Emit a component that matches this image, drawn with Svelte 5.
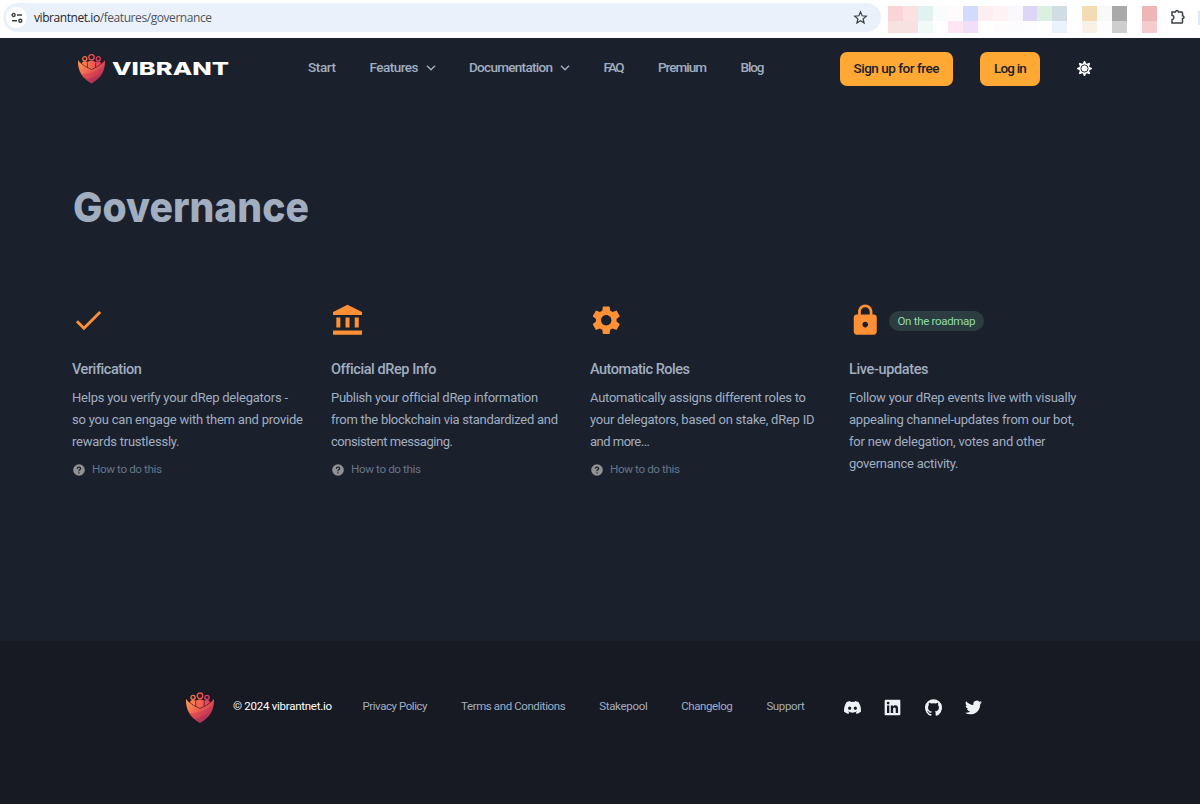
<script>
    const navItems = [
        { label: 'Start', width: 28 },
        { label: 'Features', width: 49, menu: true },
        { label: 'Documentation', width: 84, menu: true },
        { label: 'FAQ', width: 21 },
        { label: 'Premium', width: 49 },
        { label: 'Blog', width: 24 }
    ];

    const features = [
        {
            icon: 'check',
            title: 'Verification',
            width: 69.5,
            lines: [
                ['Helps you verify your dRep delegators -', 216],
                ['so you can engage with them and provide', 231],
                ['rewards trustlessly.', 107.5]
            ],
            help: true
        },
        {
            icon: 'bank',
            title: 'Official dRep Info',
            width: 104.5,
            lines: [
                ['Publish your official dRep information', 206],
                ['from the blockchain via standardized and', 227],
                ['consistent messaging.', 122]
            ],
            help: true
        },
        {
            icon: 'gear',
            title: 'Automatic Roles',
            width: 100,
            lines: [
                ['Automatically assigns different roles to', 216],
                ['your delegators, based on stake, dRep ID', 224.5],
                ['and more...', 60]
            ],
            help: true
        },
        {
            icon: 'lock',
            title: 'Live-updates',
            width: 79.5,
            badge: 'On the roadmap',
            lines: [
                ['Follow your dRep events live with visually', 227.5],
                ['appealing channel-updates from our bot,', 225],
                ['for new delegation, votes and other', 196.5],
                ['governance activity.', 109.5]
            ]
        }
    ];

    const icons = {
        check: 'M9 16.17 4.83 12l-1.42 1.41L9 19 21 7l-1.41-1.41z',
        bank: 'M12.2 1.2 2.1 6.2v2.1h20.2V6.2zM4.4 10h2.8v7.1H4.4zM10.8 10h2.8v7.1h-2.8zM17.2 10h2.8v7.1h-2.8zM2.1 19.1h20.2v3H2.1z',
        gear: 'M19.14 12.94c.04-.3.06-.61.06-.94 0-.32-.02-.64-.07-.94l2.03-1.58c.18-.14.23-.41.12-.61l-1.92-3.32c-.12-.22-.37-.29-.59-.22l-2.39.96c-.5-.38-1.03-.7-1.62-.94l-.36-2.54c-.04-.24-.24-.41-.48-.41h-3.84c-.24 0-.43.17-.47.41l-.36 2.54c-.59.24-1.13.57-1.62.94l-2.39-.96c-.22-.08-.47 0-.59.22L2.74 8.87c-.12.21-.08.47.12.61l2.03 1.58c-.05.3-.09.63-.09.94s.02.64.07.94l-2.03 1.58c-.18.14-.23.41-.12.61l1.92 3.32c.12.22.37.29.59.22l2.39-.96c.5.38 1.03.7 1.62.94l.36 2.54c.05.24.24.41.48.41h3.84c.24 0 .44-.17.47-.41l.36-2.54c.59-.24 1.13-.56 1.62-.94l2.39.96c.22.08.47 0 .59-.22l1.92-3.32c.12-.22.07-.47-.12-.61l-2.01-1.58zM12 15.6c-1.98 0-3.6-1.62-3.6-3.6s1.62-3.6 3.6-3.6 3.6 1.62 3.6 3.6-1.62 3.6-3.6 3.6z',
        lock: 'M18 8h-1V6c0-2.76-2.24-5-5-5S7 3.24 7 6v2H6c-1.1 0-2 .9-2 2v10c0 1.1.9 2 2 2h12c1.1 0 2-.9 2-2V10c0-1.1-.9-2-2-2zm-6 9c-1.1 0-2-.9-2-2s.9-2 2-2 2 .9 2 2-.9 2-2 2zm3.1-9H8.9V6c0-1.71 1.39-3.1 3.1-3.1 1.71 0 3.1 1.39 3.1 3.1v2z'
    };

    const footerLinks = [
        { label: 'Privacy Policy', width: 65 },
        { label: 'Terms and Conditions', width: 104.5 },
        { label: 'Stakepool', width: 48.5 },
        { label: 'Changelog', width: 51.5 },
        { label: 'Support', width: 38.5 }
    ];

    const socials = [
        { name: 'Discord', box: '0 0 24 24', d: 'M20.3 4.4A19.8 19.8 0 0 0 15.4 2.9l-.6 1.3a18.3 18.3 0 0 0-5.6 0L8.6 2.9a19.7 19.7 0 0 0-4.9 1.5C.6 9.1-.3 13.6.1 18.1a19.9 19.9 0 0 0 6 3l1.3-2.1-1.9-.9.4-.3a14.2 14.2 0 0 0 12.2 0l.4.3-1.9.9 1.3 2.1a19.8 19.8 0 0 0 6-3c.5-5.2-.8-9.7-3.6-13.7zM8 15.3c-1.2 0-2.2-1.1-2.2-2.4s1-2.4 2.2-2.4 2.2 1.1 2.2 2.4-1 2.4-2.2 2.4zm8 0c-1.2 0-2.2-1.1-2.2-2.4s1-2.4 2.2-2.4 2.2 1.1 2.2 2.4-1 2.4-2.2 2.4z' },
        { name: 'LinkedIn', box: '-1 -1 26 26', d: 'M22.2 0H1.8C.8 0 0 .8 0 1.7v20.6c0 .9.8 1.7 1.8 1.7h20.4c1 0 1.8-.8 1.8-1.7V1.7C24 .8 23.2 0 22.2 0zM7.1 20.5H3.6V9h3.5v11.5zM5.3 7.4a2.1 2.1 0 1 1 0-4.2 2.1 2.1 0 0 1 0 4.2zm15.2 13.1h-3.6v-5.6c0-1.3 0-3-1.8-3-1.9 0-2.1 1.4-2.1 2.9v5.7H9.4V9h3.4v1.6c.5-.9 1.6-1.9 3.4-1.9 3.6 0 4.3 2.4 4.3 5.5v6.3z' },
        { name: 'GitHub', box: '0 0 24 24', d: 'M12 .3a12 12 0 0 0-3.8 23.4c.6.1.8-.3.8-.6v-2c-3.3.7-4-1.6-4-1.6-.6-1.4-1.4-1.8-1.4-1.8-1-.7.1-.7.1-.7 1.2 0 1.9 1.2 1.9 1.2 1 1.8 2.8 1.3 3.5 1 0-.8.4-1.3.7-1.6-2.7-.3-5.5-1.3-5.5-6 0-1.2.5-2.3 1.3-3.1-.2-.4-.6-1.6 0-3.2 0 0 1-.3 3.4 1.2a11.5 11.5 0 0 1 6 0c2.3-1.5 3.3-1.2 3.3-1.2.6 1.6.2 2.8 0 3.2.9.8 1.3 1.9 1.3 3.2 0 4.6-2.8 5.6-5.5 5.9.5.4.9 1 .9 2.2v3.3c0 .3.1.7.8.6A12 12 0 0 0 12 .3' },
        { name: 'Twitter', box: '0 0 24 24', d: 'M23.95 4.6a10 10 0 0 1-2.8.8 4.9 4.9 0 0 0 2.2-2.7c-1 .5-2 1-3.1 1.2a4.9 4.9 0 0 0-8.4 4.5C7.7 8.1 4.1 6.1 1.7 3.1a4.9 4.9 0 0 0 1.5 6.6c-.8 0-1.6-.2-2.2-.6v.1c0 2.3 1.7 4.3 3.9 4.8a5 5 0 0 1-2.2.1 4.9 4.9 0 0 0 4.6 3.4A9.9 9.9 0 0 1 0 19.5a14 14 0 0 0 7.5 2.2c9.1 0 14-7.5 14-14v-.6a10 10 0 0 0 2.45-2.5z' }
    ];

    // blurred browser extensions, two rows
    const mosaic = [
        '#f9d5d7', '#fce1e3', '#e1f3f1', '#f8fcfc', '#fdfbfc', '#d1dcfc', '#fdeff0', '#fdf3f4', '#faf8fd', '#dcd6f7', '#dbf0e1', '#d1dce3', '#ffffff', '#f3dcb4', '#f9f9f9', '#a9a9a9', '#ffffff', '#efb6b8',
        '#f8e2e1', '#f8e2e1', '#f2faf9', '#ffffff', '#fce7f3', '#f1dff9', '#ffffff', '#fefcfd', '#fcfcfe', '#fdfcff', '#ffffff', '#eaf3fd', '#ffffff', '#f8f1e8', '#fdfdfd', '#cecece', '#ffffff', '#f5cccd'
    ];

    const sunPoints = Array.from({ length: 32 }, (_, i) => {
        const r = i % 4 < 2 ? 12 : 8.4;
        const a = ((i + (i % 2 ? -0.1 : 0.1) - 0.5) * Math.PI) / 16;
        return `${(12 + r * Math.sin(a)).toFixed(2)},${(12 - r * Math.cos(a)).toFixed(2)}`;
    }).join(' ');

    // spreads the letters of a label over the given width
    function fit(node, width) {
        node.style.display = 'inline-block';
        node.style.whiteSpace = 'pre';
        const natural = node.getBoundingClientRect().width;
        node.style.letterSpacing = `${(width - natural) / (node.textContent.length - 1)}px`;
        node.style.width = `${width}px`;
    }
</script>

{#snippet shield()}
    <svg class="shield" viewBox="0 0 28 31" aria-hidden="true">
        <defs>
            <linearGradient id="flame" x1="0" y1="0.1" x2="1" y2="0.8">
                <stop offset="0" stop-color="#ff9950" />
                <stop offset="0.5" stop-color="#ee5a50" />
                <stop offset="1" stop-color="#b92b58" />
            </linearGradient>
            <linearGradient id="crowd" x1="0" x2="1">
                <stop offset="0" stop-color="#f58a4c" />
                <stop offset="0.5" stop-color="#f5614f" />
                <stop offset="1" stop-color="#e43663" />
            </linearGradient>
        </defs>
        <path d="M4 11q0-3 3-3 1.800 0 3 .8 1.500-1.600 4-1.600t4 1.600q1.200-.8 3-.8 3 0 3 3l-3 5-7 2-7-2z" fill="url(#crowd)" />
        <path d="M9.900 16 9.600 9.200M18.100 16l.3-6.800" fill="none" stroke="#492029" stroke-width="0.800" />
        <g fill="#35181f" stroke-width="1.300">
            <circle cx="7" cy="5.400" r="2.100" stroke="#ef784c" />
            <circle cx="21" cy="5.400" r="2.100" stroke="#e63f61" />
            <circle cx="14" cy="3.800" r="2.800" stroke="#ef5550" />
        </g>
        <path d="M0 7q7 7 14 9.500Q21 14 28 7c.4 11.500-4.500 18.500-14 24C4.500 25.500-.4 18.500 0 7z" fill="url(#flame)" />
        <path d="M1 8.300q6.500 6 13 8.200 6.500-2.200 13-8.200" fill="none" stroke="#552027" stroke-width="0.800" />
        <path d="M3 21.500Q17 21 26.500 13c-.5 8-5 14-12.500 18C9 28 5 25 3 21.500z" fill="#b92b58" opacity="0.350" />
        <path d="M8 27Q18 25 24 20c-2 5-6 8.500-10 11z" fill="#8d2c59" opacity="0.350" />
    </svg>
{/snippet}

<div class="browser">
    <div class="omnibox">
        <span class="tune">
            <svg viewBox="0 0 12 12" fill="none" stroke="#3c4043" stroke-width="1.400">
                <circle cx="2.600" cy="3" r="1.500" />
                <path d="M6 3h5M1 8.800h5" />
                <circle cx="9.300" cy="8.800" r="1.500" />
            </svg>
        </span>
        <span class="url" use:fit={178}>vibrantnet.io<span class="path">/features/governance</span></span>
        <svg class="star" viewBox="0 0 24 24" fill="none" stroke="#3c4043" stroke-width="2">
            <path d="m12 3 2.600 6.200 6.700.6-5.100 4.400 1.500 6.600L12 17.300l-5.700 3.500 1.500-6.600-5.100-4.400 6.700-.6z" />
        </svg>
    </div>
    <div class="mosaic">
        {#each mosaic as color}
            <i style:background={color}></i>
        {/each}
    </div>
    <svg class="puzzle" viewBox="0 0 16 16" fill="none" stroke="#3c4043" stroke-width="1.500">
        <path d="M2 3h3.500q.5-1.500 1.500-1.500T8.500 3h3.200q.8 0 .8.800v3q1.500.2 1.500 1.400t-1.500 1.400v3.600q0 .8-.8.800H2v-3.300q1.900-.5 1.900-2.200T2 6.300z" />
    </svg>
    <span class="edge"></span>
</div>

<header>
    <a class="brand" href="#top" aria-label="Vibrant">
        {@render shield()}
        <svg class="wordmark" viewBox="0 0 120 24">
            <text x="1" y="18.200" textLength="117" lengthAdjust="spacingAndGlyphs">VIBRANT</text>
        </svg>
    </a>
    <nav>
        {#each navItems as item}
            <a href="#top">
                <span use:fit={item.width}>{item.label}</span>
                {#if item.menu}
                    <svg viewBox="0 0 10 6"><path d="m1 .8 4 4 4-4" fill="none" stroke="currentColor" stroke-width="1.500" /></svg>
                {/if}
            </a>
        {/each}
    </nav>
    <button class="signup"><span use:fit={86}>Sign up for free</span></button>
    <button class="login"><span use:fit={33}>Log in</span></button>
    <svg class="sun" viewBox="0 0 24 24">
        <polygon points={sunPoints} fill="#fff" />
        <circle cx="12" cy="12" r="5.700" fill="none" stroke="#1a202c" stroke-width="1.500" />
    </svg>
</header>

<main>
    <h1>
        <svg viewBox="0 0 240 56">
            <text x="0" y="42" textLength="236" lengthAdjust="spacingAndGlyphs">Governance</text>
        </svg>
    </h1>
    <div class="features">
        {#each features as feature}
            <section>
                <div class="top">
                    <svg class="icon" viewBox="0 0 24 24"><path d={icons[feature.icon]} /></svg>
                    {#if feature.badge}
                        <span class="badge"><span use:fit={78}>{feature.badge}</span></span>
                    {/if}
                </div>
                <h2><span use:fit={feature.width}>{feature.title}</span></h2>
                <p>
                    {#each feature.lines as [text, width]}
                        <span use:fit={width}>{text}</span><br />
                    {/each}
                </p>
                {#if feature.help}
                    <a class="help" href="#top">
                        <svg viewBox="0 0 12 12">
                            <circle cx="6" cy="6" r="5.800" />
                            <path d="M4.300 4.700Q4.400 3.100 6 3.100t1.700 1.500Q7.700 5.400 6 6.300v1" fill="none" stroke="#1a202c" stroke-width="1.200" />
                            <path d="M5.400 8.200h1.200v1.200H5.400z" fill="#1a202c" />
                        </svg>
                        <span use:fit={70}>How to do this</span>
                    </a>
                {/if}
            </section>
        {/each}
    </div>
</main>

<footer>
    {@render shield()}
    <span class="copy"><span use:fit={99}>© 2024 vibrantnet.io</span></span>
    <div class="links">
        {#each footerLinks as link}
            <a href="#top"><span use:fit={link.width}>{link.label}</span></a>
        {/each}
    </div>
    <div class="socials">
        {#each socials as social}
            <svg viewBox={social.box} role="img" aria-label={social.name}><path d={social.d} fill-rule="evenodd" /></svg>
        {/each}
    </div>
</footer>

<style>
    :global(body) {
        background: #1a202c;
    }

    :global(#app) {
        display: flex;
        flex-direction: column;
        height: 804px;
        overflow: hidden;
        font-family: Roboto, "Liberation Sans", sans-serif;
        color: #a0aec0;
    }

    a {
        color: inherit;
        text-decoration: none;
    }

    svg {
        display: block;
        flex: none;
        overflow: visible;
    }

    .browser {
        display: flex;
        box-sizing: border-box;
        height: 38px;
        padding: 3px 0 0 3px;
        background: #fff;
    }

    .omnibox {
        display: flex;
        align-items: center;
        box-sizing: border-box;
        width: 878px;
        height: 29px;
        padding: 0 13px 0 3px;
        border-radius: 15px;
        background: #ebf1fa;
    }

    .tune {
        display: flex;
        align-items: center;
        justify-content: center;
        width: 21px;
        height: 21px;
        margin-right: 7px;
        border-radius: 50%;
        background: #fff;
    }

    .tune svg {
        width: 12px;
    }

    .url {
        font: 12px "Open Sans", "Noto Sans", sans-serif;
        color: #24272b;
    }

    .path {
        color: #50545a;
    }

    .star {
        width: 15px;
        margin-left: auto;
    }

    .mosaic {
        display: grid;
        grid-template-columns: repeat(18, 1fr);
        grid-template-rows: 15px 12px;
        width: 269px;
        margin: 3px 0 0 7px;
    }

    .puzzle {
        width: 16px;
        height: 16px;
        margin: 6px 0 0 13px;
    }

    .edge {
        width: 2px;
        height: 14px;
        margin: 8px 0 0 auto;
        background: #dfe8fa;
    }

    header {
        display: flex;
        align-items: center;
        height: 61px;
        padding-left: 78px;
    }

    .brand {
        display: flex;
        align-items: center;
        width: 230px;
    }

    .shield {
        width: 27px;
        height: 31px;
    }

    .wordmark {
        width: 120px;
        height: 24px;
        margin-left: 6px;
    }

    .wordmark text {
        font: 800 18px Inter, sans-serif;
        fill: #fff;
    }

    nav {
        display: flex;
        gap: 33.5px;
        width: 531.5px;
        padding-bottom: 3px;
        font-size: 13.5px;
        font-weight: 500;
    }

    nav a {
        display: flex;
        align-items: center;
    }

    nav svg {
        width: 10px;
        margin: 2px 0 0 7px;
    }

    button {
        height: 34px;
        padding: 0 0 2px;
        border: 0;
        border-radius: 7px;
        background: #ffa834;
        color: #1a202c;
        font: 500 13.5px Roboto, sans-serif;
    }

    .signup {
        width: 113.5px;
    }

    .login {
        width: 60px;
        margin: 0 36.5px 0 27px;
    }

    .sun {
        width: 15px;
    }

    main {
        height: 542px;
        padding-left: 72px;
    }

    h1 {
        margin: 81px 0 0 1px;
    }

    h1 svg {
        width: 240px;
        height: 56px;
    }

    h1 text {
        font: 800 41.5px Inter, sans-serif;
        fill: #a0aec0;
    }

    .features {
        display: grid;
        grid-template-columns: repeat(4, 259px);
        margin-top: 67px;
    }

    .top {
        display: flex;
        align-items: center;
        height: 35px;
    }

    .icon {
        width: 34.5px;
        margin-left: -1px;
        fill: #ff9035;
    }

    .badge {
        height: 20px;
        margin-left: 6.5px;
        padding: 0 8.5px;
        border-radius: 10px;
        background: #2b3d40;
        color: #8fdcaa;
        font-size: 11.5px;
        line-height: 20px;
    }

    h2 {
        margin: 21px 0 6px;
        font-size: 14.5px;
        font-weight: 500;
        line-height: 22px;
    }

    p {
        margin: 0;
        font-size: 13px;
        line-height: 22px;
    }

    p span {
        vertical-align: top;
    }

    .help {
        display: flex;
        align-items: center;
        margin-top: 5px;
        color: #66758a;
        font-size: 11.7px;
        line-height: 22px;
    }

    .help svg {
        width: 12px;
        margin: 1px 7.5px 0 .5px;
        fill: #929293;
    }

    footer {
        display: flex;
        flex: 1;
        align-items: flex-start;
        padding: 50px 0 0 186px;
        background: #171923;
        font-size: 11.5px;
        line-height: 31px;
    }

    footer .shield {
        width: 28px;
        height: 33px;
    }

    .copy {
        margin-left: 19px;
        color: #fff;
    }

    .links {
        display: flex;
        gap: 33.6px;
        margin-left: 30.5px;
    }

    .socials {
        display: flex;
        gap: 23.6px;
        margin: 8px 0 0 38.7px;
    }

    .socials svg {
        width: 17px;
        height: 17px;
        fill: #edf2f7;
    }
</style>
